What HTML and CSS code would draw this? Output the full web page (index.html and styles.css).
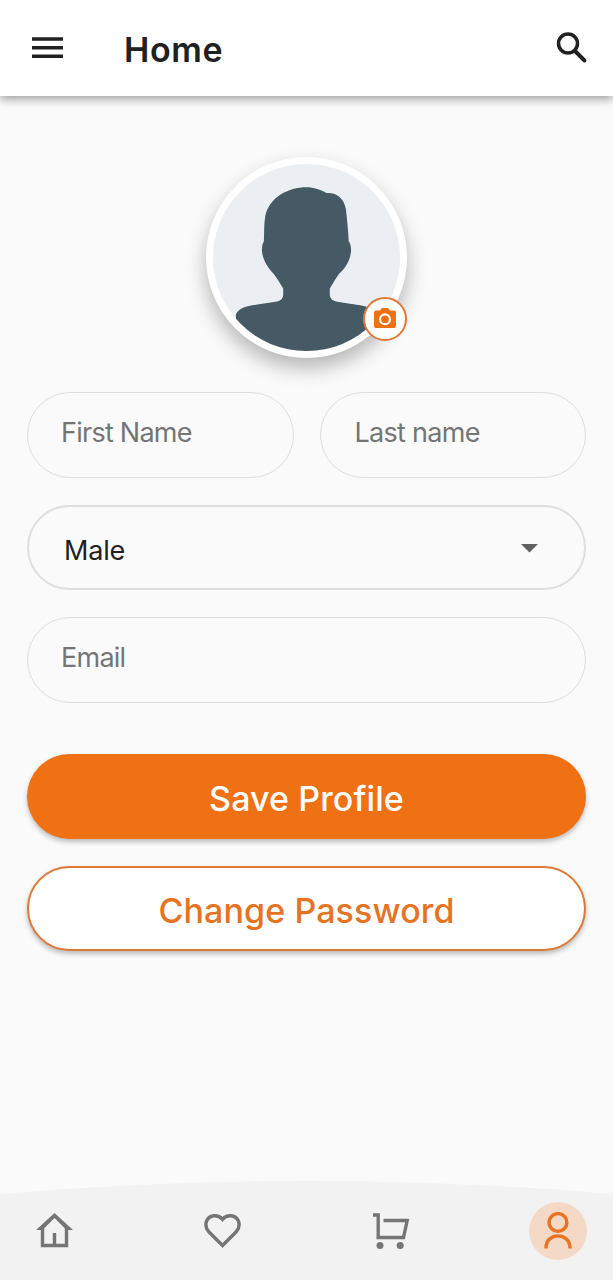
FILE: index.html
```html
<!DOCTYPE html>
<html lang="en">
<head>
<meta charset="utf-8">
<title>Home</title>
<link rel="stylesheet" href="styles.css">
</head>
<body>
<div class="screen">
  <header class="topbar">
    <svg class="menu-icon" width="31" height="22" viewBox="0 0 31 22"><path d="M0 2h31M0 10.7h31M0 19.3h31"/></svg>
    <h1 class="title">Home</h1>
    <svg class="search-icon" width="32" height="32" viewBox="0 0 32 32"><circle cx="12" cy="11.500" r="9.500"/><path d="M19.500 19.500l9 9" stroke-width="3.900" stroke-linecap="round"/></svg>
  </header>
  <main class="content">
    <div class="avatar">
      <svg class="portrait" viewBox="69 71 562 562">
        <path class="silhouette" d="M350 141C373 141 392 149 410 158C442 156 462 174 468 205C472 235 475 270 477 303C482 309 484 319 484 332C481 364 465 386 448 401C437 416 430 430 420 445V465Q421 481 439 484L485 492C525 498 565 502 565 535V650H138V523C147 501 174 498 212 492L262 484Q279 481 280 465V445C270 430 263 416 251 401C234 383 218 359 216 332Q215 314 222 303C223 278 222 251 226 227C239 171 295 141 350 141Z"/>
      </svg>
      <button class="camera" aria-label="Change photo">
        <svg width="24" height="22" viewBox="0 0 24 22"><path fill-rule="evenodd" d="M3 3.400h4L9 1h6l2 2.400h4q2 0 2 2V19q0 2-2 2H3q-2 0-2-2V5.400q0-2 2-2ZM12 6.300a6 6 0 1 0 0 12a6 6 0 0 0 0-12Z"/><circle cx="12" cy="12.300" r="3.900"/></svg>
      </button>
    </div>
    <form class="form">
      <div class="name-row">
        <div class="field first">First Name</div>
        <div class="field last">Last name</div>
      </div>
      <div class="select"><span>Male</span><svg width="17" height="9" viewBox="0 0 17 9"><path d="M0 0h17L8.500 8.500z"/></svg></div>
      <div class="field email">Email</div>
      <button type="button" class="button save">Save Profile</button>
      <button type="button" class="button password">Change Password</button>
    </form>
  </main>
  <nav class="bottom-nav">
    <svg class="curve" viewBox="0 0 613 100" preserveAspectRatio="none"><path d="M0 14Q306.500-12 613 14V100H0Z"/></svg>
    <a class="tab"><svg width="38" height="36" viewBox="0 0 38 36"><path d="M6.500 15V32.500H30.500V15M18.500 33V20"/><path class="solid" d="M0 17L18.500 0L37 17H30.500L18.500 5L6.500 17Z"/></svg></a>
    <a class="tab"><svg width="38" height="36" viewBox="0 0 38 36"><path d="M18.500 32.500L5 19C1.900 15.500 1.300 11 2.700 7.800C5.500 1.600 14 1.100 18.500 6.300C23 1.100 31.500 1.600 34.300 7.800C35.700 11 35.100 15.500 32 19Z"/></svg></a>
    <a class="tab"><svg width="38" height="38" viewBox="0 0 38 38"><path d="M1 3H6.200V25.500H31.500L35.200 8.500H11.500"/><circle class="solid" cx="8" cy="33.500" r="3.500"/><circle class="solid" cx="28.200" cy="33.500" r="3.500"/></svg></a>
    <a class="tab active"><svg width="30" height="38" viewBox="0 0 30 38"><circle cx="15" cy="10.500" r="8.900"/><path d="M3 36.500V36C3 19.800 27 19.800 27 36V36.500"/></svg></a>
  </nav>
</div>
</body>
</html>
```
FILE: styles.css
```css
* { box-sizing: border-box; }
body { margin: 0; background: #fafafa; font-family: Inter, "Liberation Sans", sans-serif; color: #212121; }
.screen { height: 1280px; display: flex; flex-direction: column; overflow: hidden; }
.topbar { height: 96px; flex: none; display: flex; align-items: center; padding: 0 25px 0 32px; background: #fff; box-shadow: 0 3px 9px rgba(0,0,0,.38); }
.menu-icon, .search-icon { fill: none; stroke: #212121; stroke-width: 3.5; }
.search-icon { margin-left: auto; }
.title { margin: 3px 0 0 61px; font-size: 34px; font-weight: 600; line-height: 44px; letter-spacing: .6px; }
.content { flex: 1; padding: 61px 27px 0; }
.avatar { width: 201px; height: 201px; margin: 0 auto; position: relative; border: 7px solid #fff; border-radius: 50%; background: #fff; box-shadow: 0 10px 20px rgba(0,0,0,.28); }
.portrait { display: block; width: 187px; height: 187px; border-radius: 50%; background: #ebeef2; }
.silhouette { fill: #455a64; }
.camera { position: absolute; right: -7px; bottom: 10px; width: 44px; height: 44px; padding: 0 1px 2px 0; display: grid; place-items: center; border: 2px solid #df7835; border-radius: 50%; background: #fff; }
.camera svg { fill: #f07014; }
.form { margin-top: 34px; display: flex; flex-direction: column; }
.name-row { display: grid; grid-template-columns: 1fr 1fr; gap: 26px; }
.field { height: 86px; padding: 0 33px 6px; display: flex; align-items: center; border: 1px solid #dedede; border-radius: 43px; font-size: 27px; letter-spacing: -.75px; color: #757575; }
.last { padding-left: 34px; letter-spacing: -.7px; }
.select { height: 85px; margin-top: 27px; padding: 5px 46px 0 35px; display: flex; align-items: center; justify-content: space-between; border: 2px solid #dedede; border-radius: 43px; font-size: 27px; letter-spacing: -.2px; }
.select svg { fill: #616161; margin-bottom: 4px; }
.email { margin-top: 27px; }
.button { height: 85px; padding: 5px 0 0; border: 0; border-radius: 43px; font: 500 34px/44px Inter, sans-serif; letter-spacing: .1px; box-shadow: 0 3px 5px rgba(0,0,0,.25); }
.save { margin-top: 51px; background: #f07014; color: #fff; }
.password { margin-top: 27px; border: 2px solid #df7835; background: #fff; color: #e57324; }
.bottom-nav { height: 100px; flex: none; position: relative; display: flex; justify-content: space-between; padding: 21.5px 25.5px 20.5px 26px; }
.curve { position: absolute; inset: 0; width: 100%; height: 100%; fill: #f2f2f2; }
.tab { position: relative; width: 58px; height: 58px; display: grid; place-items: center; border-radius: 50%; }
.tab svg { fill: none; stroke: #757575; stroke-width: 3.4; }
.tab .solid { fill: #757575; stroke: none; }
.active { background: #f4d9c7; }
.tab.active svg { stroke: #e87322; }
```
